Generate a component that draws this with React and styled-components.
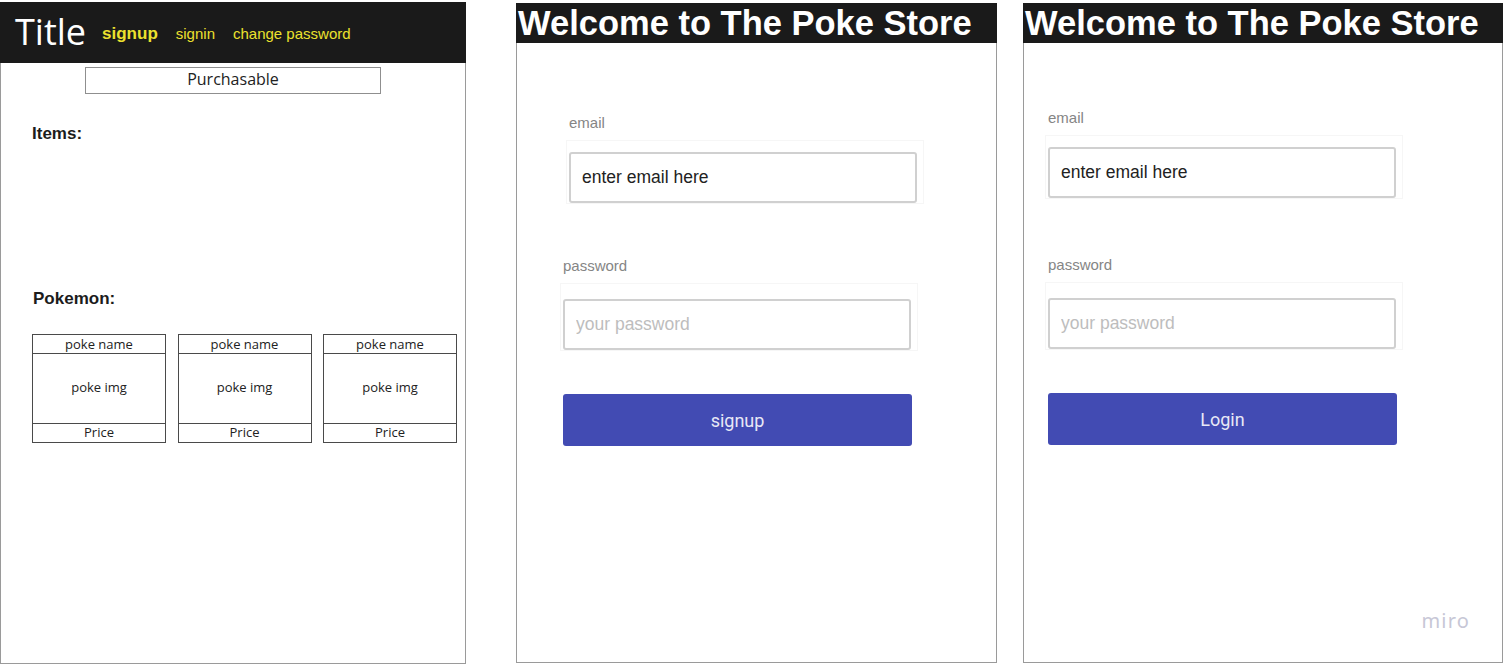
import React from "react";
import styled, { createGlobalStyle } from "styled-components";

const GlobalStyle = createGlobalStyle`
  html, body {
    margin: 0;
    padding: 0;
    background: #ffffff;
  }
  body {
    font-family: "Liberation Sans", Arial, sans-serif;
  }
  * {
    box-sizing: border-box;
  }
`;

const pokemon = [1, 2, 3];

function StoreFrame() {
  return (
    <Frame width={466} top={2} height={662}>
      <NavBar>
        <Brand>Title</Brand>
        <NavLink bold>signup</NavLink>
        <NavLink>signin</NavLink>
        <NavLink>change password</NavLink>
      </NavBar>
      <Purchasable>Purchasable</Purchasable>
      <SectionLabel top={32}>Items:</SectionLabel>
      <SectionLabel top={149} left={32}>Pokemon:</SectionLabel>
      <CardRow>
        {pokemon.map((p) => (
          <Card key={p}>
            <CardName>poke name</CardName>
            <CardImg>poke img</CardImg>
            <CardPrice>Price</CardPrice>
          </Card>
        ))}
      </CardRow>
    </Frame>
  );
}

function AuthFrame({ width, gapLeft, emailTop, emailX, passTop, passX, action }) {
  return (
    <Frame width={width} top={3} height={660} gapLeft={gapLeft}>
      <WelcomeBar>Welcome to The Poke Store</WelcomeBar>
      <Field top={emailTop} left={emailX}>
        <FieldLabel>email</FieldLabel>
        <InputWrap pad={11}>
          <Input defaultValue="enter email here" readOnly />
        </InputWrap>
      </Field>
      <Field top={passTop} left={passX}>
        <FieldLabel>password</FieldLabel>
        <InputWrap pad={15}>
          <Input placeholder="your password" readOnly />
        </InputWrap>
      </Field>
      <SubmitButton left={passX}>{action}</SubmitButton>
    </Frame>
  );
}

export default function App() {
  return (
    <>
      <GlobalStyle />
      <Board>
        <StoreFrame />
        <AuthFrame
          width={481}
          gapLeft={50}
          emailTop={72}
          emailX={52}
          passTop={54}
          passX={46}
          action="signup"
        />
        <AuthFrame
          width={480}
          gapLeft={26}
          emailTop={67}
          emailX={24}
          passTop={58}
          passX={24}
          action="Login"
        />
        <MiroMark>miro</MiroMark>
      </Board>
    </>
  );
}

const Board = styled.div`
  position: relative;
  width: 1504px;
  height: 664px;
  display: flex;
  align-items: flex-start;
  overflow: hidden;
`;

const Frame = styled.section`
  width: ${(p) => p.width}px;
  height: ${(p) => p.height}px;
  margin-top: ${(p) => p.top}px;
  margin-left: ${(p) => p.gapLeft || 0}px;
  border: 1px solid #9a9a9a;
  border-top: none;
  display: flex;
  flex-direction: column;
  flex-shrink: 0;
  background: #fff;
`;

const NavBar = styled.header`
  height: 61px;
  margin: 0 -1px;
  background: #1a1a1a;
  display: flex;
  align-items: center;
  padding-left: 15px;
`;

const Brand = styled.span`
  font-family: "Open Sans", sans-serif;
  font-size: 36px;
  color: #fff;
  margin-right: 16px;
  margin-top: -2px;
`;

const NavLink = styled.a`
  font-family: "Liberation Sans", Arial, sans-serif;
  font-size: ${(p) => (p.bold ? 17 : 15)}px;
  font-weight: ${(p) => (p.bold ? 700 : 400)};
  color: #ece12e;
  margin-right: 18px;
  margin-top: 2px;
`;

const Purchasable = styled.div`
  margin: 4px 0 0 84px;
  width: 296px;
  height: 27px;
  border: 1px solid #8f8f8f;
  font-family: "Open Sans", sans-serif;
  font-size: 16px;
  color: #222;
  display: flex;
  align-items: center;
  justify-content: center;
  padding-bottom: 3px;
`;

const SectionLabel = styled.h3`
  margin: ${(p) => p.top}px 0 0 ${(p) => p.left || 31}px;
  font-size: 17px;
  font-weight: 700;
  line-height: 16px;
  color: #1c1c1c;
`;

const CardRow = styled.div`
  display: flex;
  gap: 11.5px;
  margin: 27px 0 0 31px;
`;

const Card = styled.div`
  width: 134px;
  height: 109px;
  border: 1px solid #4a4a4a;
  display: flex;
  flex-direction: column;
  font-family: "Open Sans", sans-serif;
  font-size: 13px;
  color: #222;
`;

const CardName = styled.div`
  height: 19px;
  border-bottom: 1px solid #4a4a4a;
  display: flex;
  align-items: center;
  justify-content: center;
  padding-bottom: 1px;
`;

const CardImg = styled.div`
  flex: 1;
  display: flex;
  align-items: center;
  justify-content: center;
  padding-bottom: 4px;
`;

const CardPrice = styled.div`
  height: 19px;
  border-top: 1px solid #4a4a4a;
  display: flex;
  align-items: center;
  justify-content: center;
  padding-bottom: 2px;
`;

const WelcomeBar = styled.header`
  height: 40px;
  margin: 0 -1px;
  background: #1a1a1a;
  color: #fff;
  font-size: 34.5px;
  font-weight: 700;
  line-height: 40px;
  padding-left: 2px;
  white-space: nowrap;
  overflow: hidden;
`;

const Field = styled.div`
  margin: ${(p) => p.top}px 0 0 ${(p) => p.left}px;
  display: flex;
  flex-direction: column;
`;

const FieldLabel = styled.label`
  font-size: 15px;
  line-height: 16px;
  color: #858585;
  margin-bottom: 9px;
`;

const InputWrap = styled.div`
  border: 1px solid #f6f6f6;
  margin-left: -3px;
  padding: ${(p) => p.pad}px 6px 0 2px;
  width: 358px;
`;

const Input = styled.input`
  display: block;
  width: 348px;
  height: 51px;
  border: 2px solid #d0d0d0;
  border-radius: 3px;
  padding: 0 11px;
  font-family: "Liberation Sans", Arial, sans-serif;
  font-size: 17.5px;
  color: #222;
  outline: none;
  &::placeholder {
    color: #bdbdbd;
  }
`;

const SubmitButton = styled.button`
  margin: 43px 0 0 ${(p) => p.left}px;
  width: 349px;
  height: 52px;
  border: none;
  border-radius: 3px;
  background: #424bb3;
  color: #e8e8f6;
  font-family: Roboto, "Liberation Sans", sans-serif;
  font-size: 18px;
`;

const MiroMark = styled.span`
  position: absolute;
  right: 34px;
  bottom: 30px;
  font-family: "Noto Sans", sans-serif;
  font-size: 20px;
  letter-spacing: 1.2px;
  color: #c7c7d6;
`;
